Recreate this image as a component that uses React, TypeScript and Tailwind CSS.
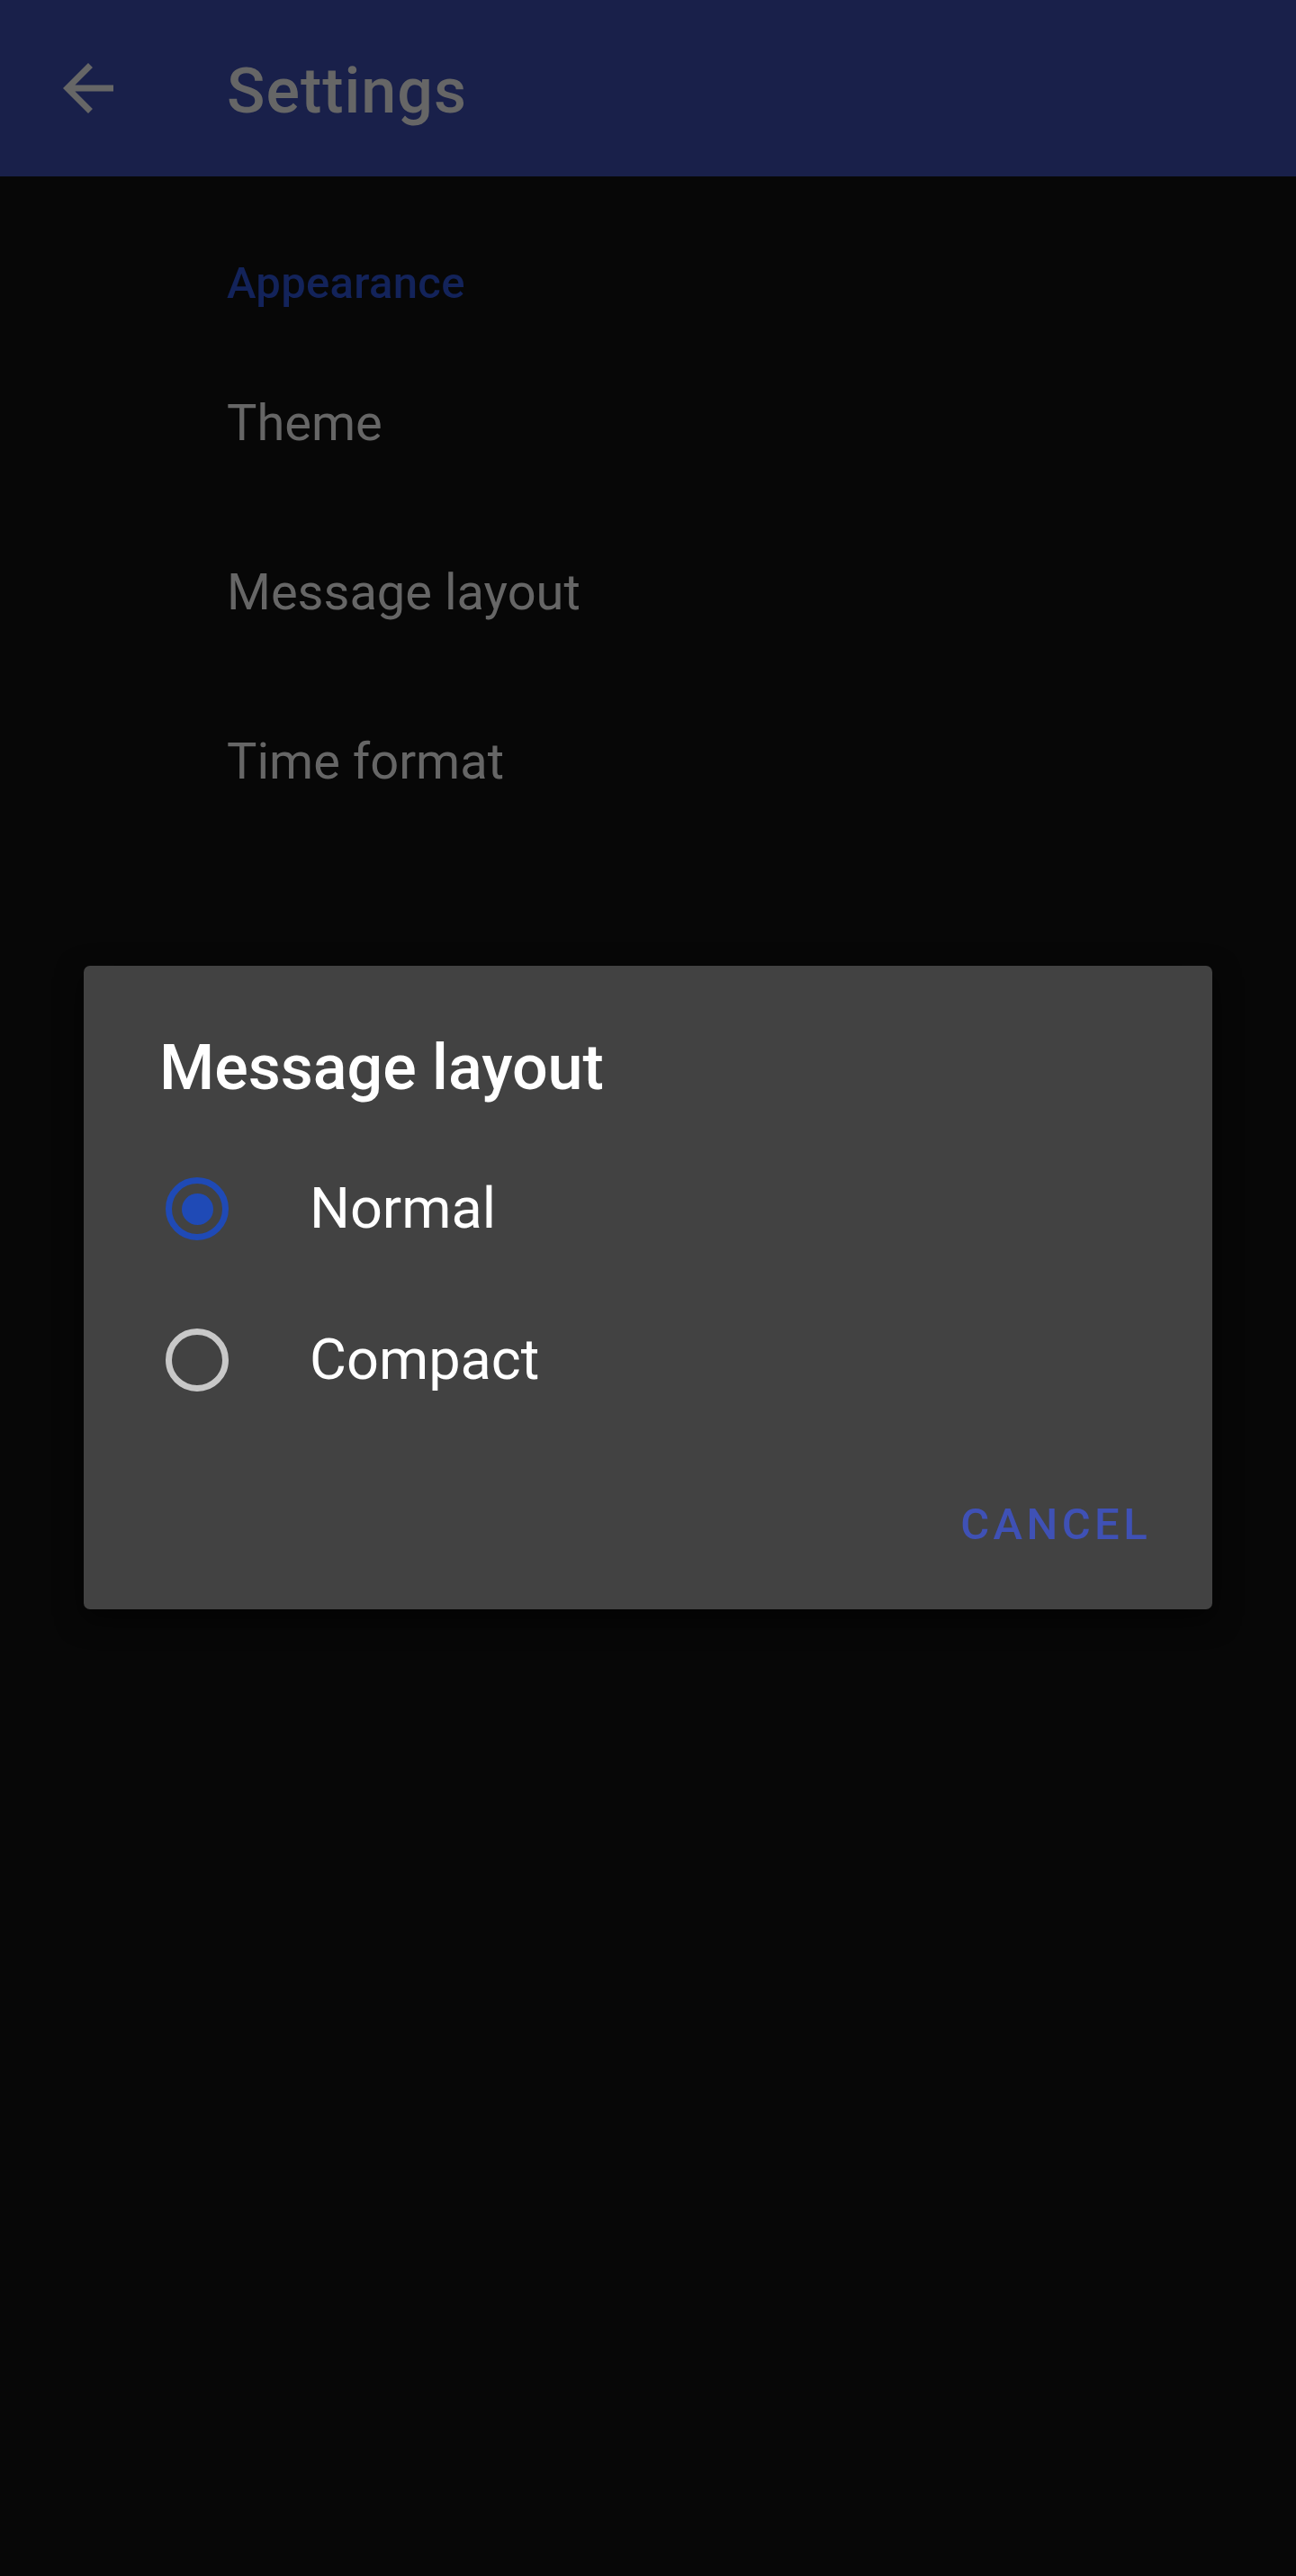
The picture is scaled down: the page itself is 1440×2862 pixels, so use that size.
import React from "react";

function ArrowBack() {
  return (
    <svg width="84" height="84" viewBox="0 0 24 24" className="shrink-0">
      <path
        d="M20 11H7.83l5.59-5.59L12 4l-8 8 8 8 1.41-1.41L7.83 13H20v-2z"
        fill="#666666"
      />
    </svg>
  );
}

function Radio({ checked }: { checked: boolean }) {
  return checked ? (
    <div className="w-[70px] h-[70px] rounded-full border-[7px] border-[#1f4ab6] flex items-center justify-center shrink-0">
      <div className="w-[35px] h-[35px] rounded-full bg-[#1f4ab6]" />
    </div>
  ) : (
    <div className="w-[70px] h-[70px] rounded-full border-[7px] border-[#c8c8c8] shrink-0" />
  );
}

export default function App() {
  const items = ["Theme", "Message layout", "Time format"];
  return (
    <div
      className="relative w-[1440px] h-[2862px] bg-[#070707] overflow-hidden"
      style={{ fontFamily: "Roboto, 'Noto Sans', sans-serif" }}
    >
      <header className="h-[196px] bg-[#19204a] flex items-center">
        <div className="ml-[56px]">
          <ArrowBack />
        </div>
        <h1 className="ml-[112px] mt-[6px] text-[70px] leading-[82px] font-medium tracking-[1px] text-[#666666]">
          Settings
        </h1>
      </header>

      <div className="pl-[252px]">
        <div className="mt-[89px] text-[49px] leading-[60px] font-medium tracking-[0.3px] text-[#13235a]">
          Appearance
        </div>
        <div className="mt-[31px] flex flex-col">
          {items.map((t) => (
            <div key={t} className="h-[188px] flex items-center">
              <span className="text-[56px] leading-[66px] text-[#666666]">{t}</span>
            </div>
          ))}
        </div>
      </div>

      <div className="absolute left-[93px] top-[1073px] w-[1254px] h-[715px] rounded-[7px] bg-[#424242] shadow-[0_10px_30px_rgba(0,0,0,0.6)] flex flex-col">
        <div className="pl-[84px] pt-[72px] text-[70px] leading-[82px] font-medium text-white">
          Message layout
        </div>
        <div className="mt-[32px] flex flex-col">
          {[
            { label: "Normal", checked: true },
            { label: "Compact", checked: false },
          ].map((o) => (
            <div key={o.label} className="h-[168px] flex items-center pl-[91px]">
              <Radio checked={o.checked} />
              <span className="ml-[90px] text-[63px] leading-[74px] text-white">{o.label}</span>
            </div>
          ))}
        </div>
        <div className="mt-[70px] flex justify-end pr-[68px]">
          <span className="text-[49px] leading-[58px] font-medium tracking-[4.4px] text-[#3f51b5]">
            CANCEL
          </span>
        </div>
      </div>
    </div>
  );
}
